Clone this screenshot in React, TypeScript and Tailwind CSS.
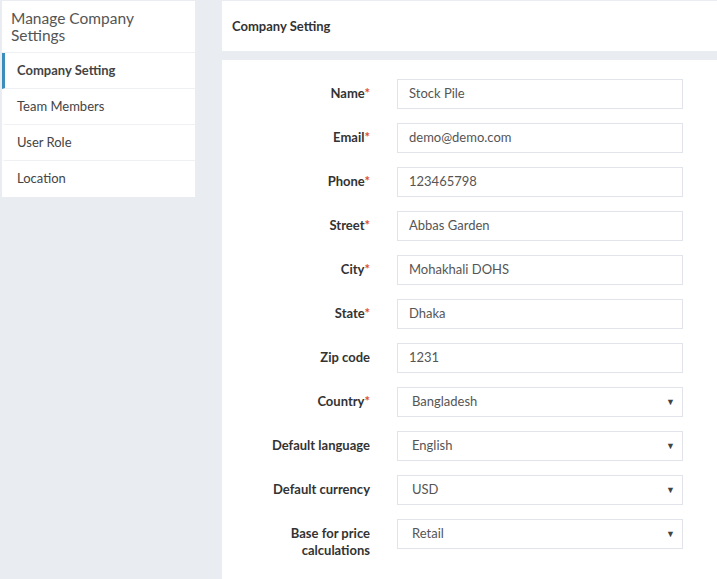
const fields = [
  { label: "Name", value: "Stock Pile", required: true },
  { label: "Email", value: "demo@demo.com", required: true },
  { label: "Phone", value: "123465798", required: true },
  { label: "Street", value: "Abbas Garden", required: true },
  { label: "City", value: "Mohakhali DOHS", required: true },
  { label: "State", value: "Dhaka", required: true },
  { label: "Zip code", value: "1231", required: false },
];

const selects = [
  { label: "Country", value: "Bangladesh", required: true },
  { label: "Default language", value: "English", required: false },
  { label: "Default currency", value: "USD", required: false },
  { label: "Base for price calculations", value: "Retail", required: false },
];

const menu = ["Company Setting", "Team Members", "User Role", "Location"];

const Label = ({ text, required }: { text: string; required: boolean }) => (
  <div className="w-[148px] shrink-0 pl-[38px] pt-[6px] text-right text-[13px] font-bold leading-[17px] text-[#333]">
    {text}
    {required && <span className="text-[#dd4b39]">*</span>}
  </div>
);

const App = () => {
  return (
    <div
      className="flex h-[579px] w-[717px] gap-[27px] overflow-hidden bg-[#e9edf2] pl-[2px] pt-[1px]"
      style={{ fontFamily: "Lato, 'Noto Sans', sans-serif" }}
    >
      <aside className="w-[193px] shrink-0 self-start bg-white">
        <h2 className="border-b border-[#eef0f3] px-[9px] pb-[9px] pt-[9px] text-[15.5px] leading-[16.5px] text-[#555]">
          Manage Company
          <br />
          Settings
        </h2>
        <ul>
          {menu.map((item, i) => (
            <li
              key={item}
              className={
                "flex h-[36px] items-center border-l-[3px] pl-[12px] text-[13px] text-[#444] " +
                (i === 0 ? "border-l-[#3c8dbc] font-bold" : "border-l-transparent") +
                (i < menu.length - 1 ? " border-b border-b-[#eef0f3]" : "")
              }
            >
              {item}
            </li>
          ))}
        </ul>
      </aside>

      <main className="flex min-h-0 flex-1 flex-col gap-[9px]">
        <div className="flex h-[50px] shrink-0 items-center bg-white px-[10px] pt-[2px] text-[13px] font-bold text-[#333]">
          Company Setting
        </div>

        <div className="flex flex-1 flex-col gap-[14px] bg-white pt-[19px]">
          {fields.map((f) => (
            <div key={f.label} className="flex h-[30px] shrink-0 gap-[27px]">
              <Label text={f.label} required={f.required} />
              <div className="flex h-[30px] w-[286px] items-center border border-[#e1e4ea] px-[11px] text-[13px] text-[#555]">
                {f.value}
              </div>
            </div>
          ))}
          {selects.map((f) => (
            <div key={f.label} className="flex h-[30px] shrink-0 gap-[27px]">
              <Label text={f.label} required={f.required} />
              <div className="flex h-[30px] w-[286px] items-center justify-between border border-[#e1e4ea] pl-[14px] pr-[7px] text-[13px] text-[#555]">
                <span>{f.value}</span>
                <span className="text-[9px] text-[#444]">▼</span>
              </div>
            </div>
          ))}
        </div>
      </main>
    </div>
  );
};

export default App;
